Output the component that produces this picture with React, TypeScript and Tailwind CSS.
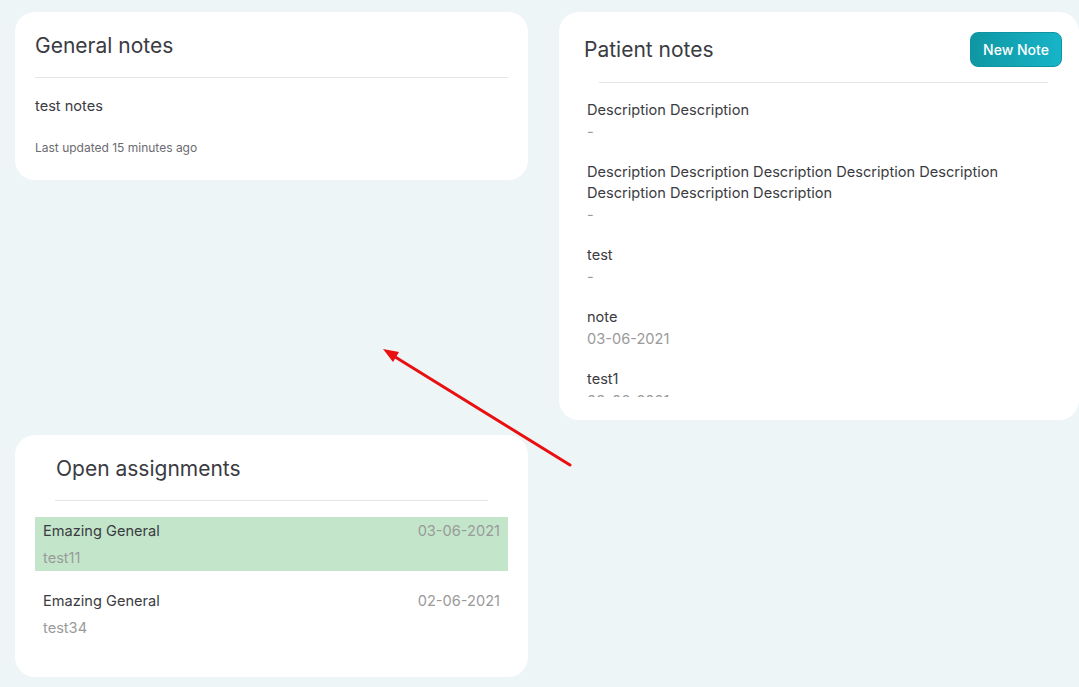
import React from "react";

const notes = [
  { t: "Description Description", s: "-" },
  { t: "Description Description Description Description Description Description Description Description", s: "-" },
  { t: "test", s: "-" },
  { t: "note", s: "03-06-2021" },
  { t: "test1", s: "03-06-2021" },
  { t: "test2", s: "03-06-2021" },
];

const rows = [
  { t: "Emazing General", d: "03-06-2021", s: "test11", active: true },
  { t: "Emazing General", d: "02-06-2021", s: "test34", active: false },
];

export default function App() {
  return (
    <div
      className="relative w-[1079px] h-[687px] overflow-hidden bg-[#eef5f7] text-[#3b3b42]"
      style={{ fontFamily: "Inter, 'Noto Sans', sans-serif" }}
    >
      <div className="flex gap-[31px] pl-[15px] pt-[12px]">
        <div className="flex w-[513px] flex-col">
          <div className="h-[168px] rounded-[20px] bg-white px-[20px] pt-[22px]">
            <div className="border-b border-[#e3e5e8] pb-[19px] text-[21px] leading-[24px]">General notes</div>
            <div className="mt-[18px] text-[14.6px] leading-[20px]">test notes</div>
            <div className="mt-[24px] text-[12px] leading-[16px] text-[#6b6b70]">Last updated 15 minutes ago</div>
          </div>
          <div className="mt-[255px] h-[242px] rounded-[20px] bg-white pt-[22px]">
            <div className="mx-[40px] border-b border-[#e3e5e8] pb-[19px] pl-[1px] text-[21px] leading-[24px]">Open assignments</div>
            <div className="mx-[20px] mt-[16px] flex flex-col gap-[16px]">
              {rows.map((r, i) => (
                <div key={i} className={`h-[54px] px-[8px] pt-[4px] ${r.active ? "bg-[#c3e6cb]" : ""}`}>
                  <div className="flex justify-between text-[14.6px] leading-[20px]">
                    <span>{r.t}</span>
                    <span className="text-[#9a9a9a]">{r.d}</span>
                  </div>
                  <div className="mt-[7px] text-[14.6px] leading-[20px] text-[#9a9a9a]">{r.s}</div>
                </div>
              ))}
            </div>
          </div>
        </div>
        <div className="h-[408px] w-[520px] rounded-[20px] bg-white">
          <div className="flex items-center justify-between pl-[25px] pr-[17px] pt-[20px]">
            <div className="text-[21px] leading-[24px]">Patient notes</div>
            <button className="h-[35px] w-[92px] rounded-[8px] border border-[#0e95a1] bg-gradient-to-r from-[#0f97a3] to-[#17b4c8] text-[14px] font-medium text-white">
              New Note
            </button>
          </div>
          <div className="ml-[40px] mr-[31px] mt-[15px] border-b border-[#e3e5e8]" />
          <div className="h-[314px] overflow-hidden pl-[28px] pr-[60px] pt-[17px]">
            {notes.map((n, i) => (
              <div key={i} className="mb-[19px]">
                <div className="text-[14.6px] leading-[21px]">{n.t}</div>
                <div className="mt-[1px] text-[14.6px] leading-[21px] text-[#9a9a9a]">{n.s}</div>
              </div>
            ))}
          </div>
        </div>
      </div>
      <svg className="pointer-events-none absolute left-0 top-0" width="1079" height="687">
        <line x1="570" y1="465" x2="392" y2="355" stroke="#e81010" strokeWidth="3" strokeLinecap="round" />
        <polygon points="383,349 399,352 393,362" fill="#e81010" />
      </svg>
    </div>
  );
}
